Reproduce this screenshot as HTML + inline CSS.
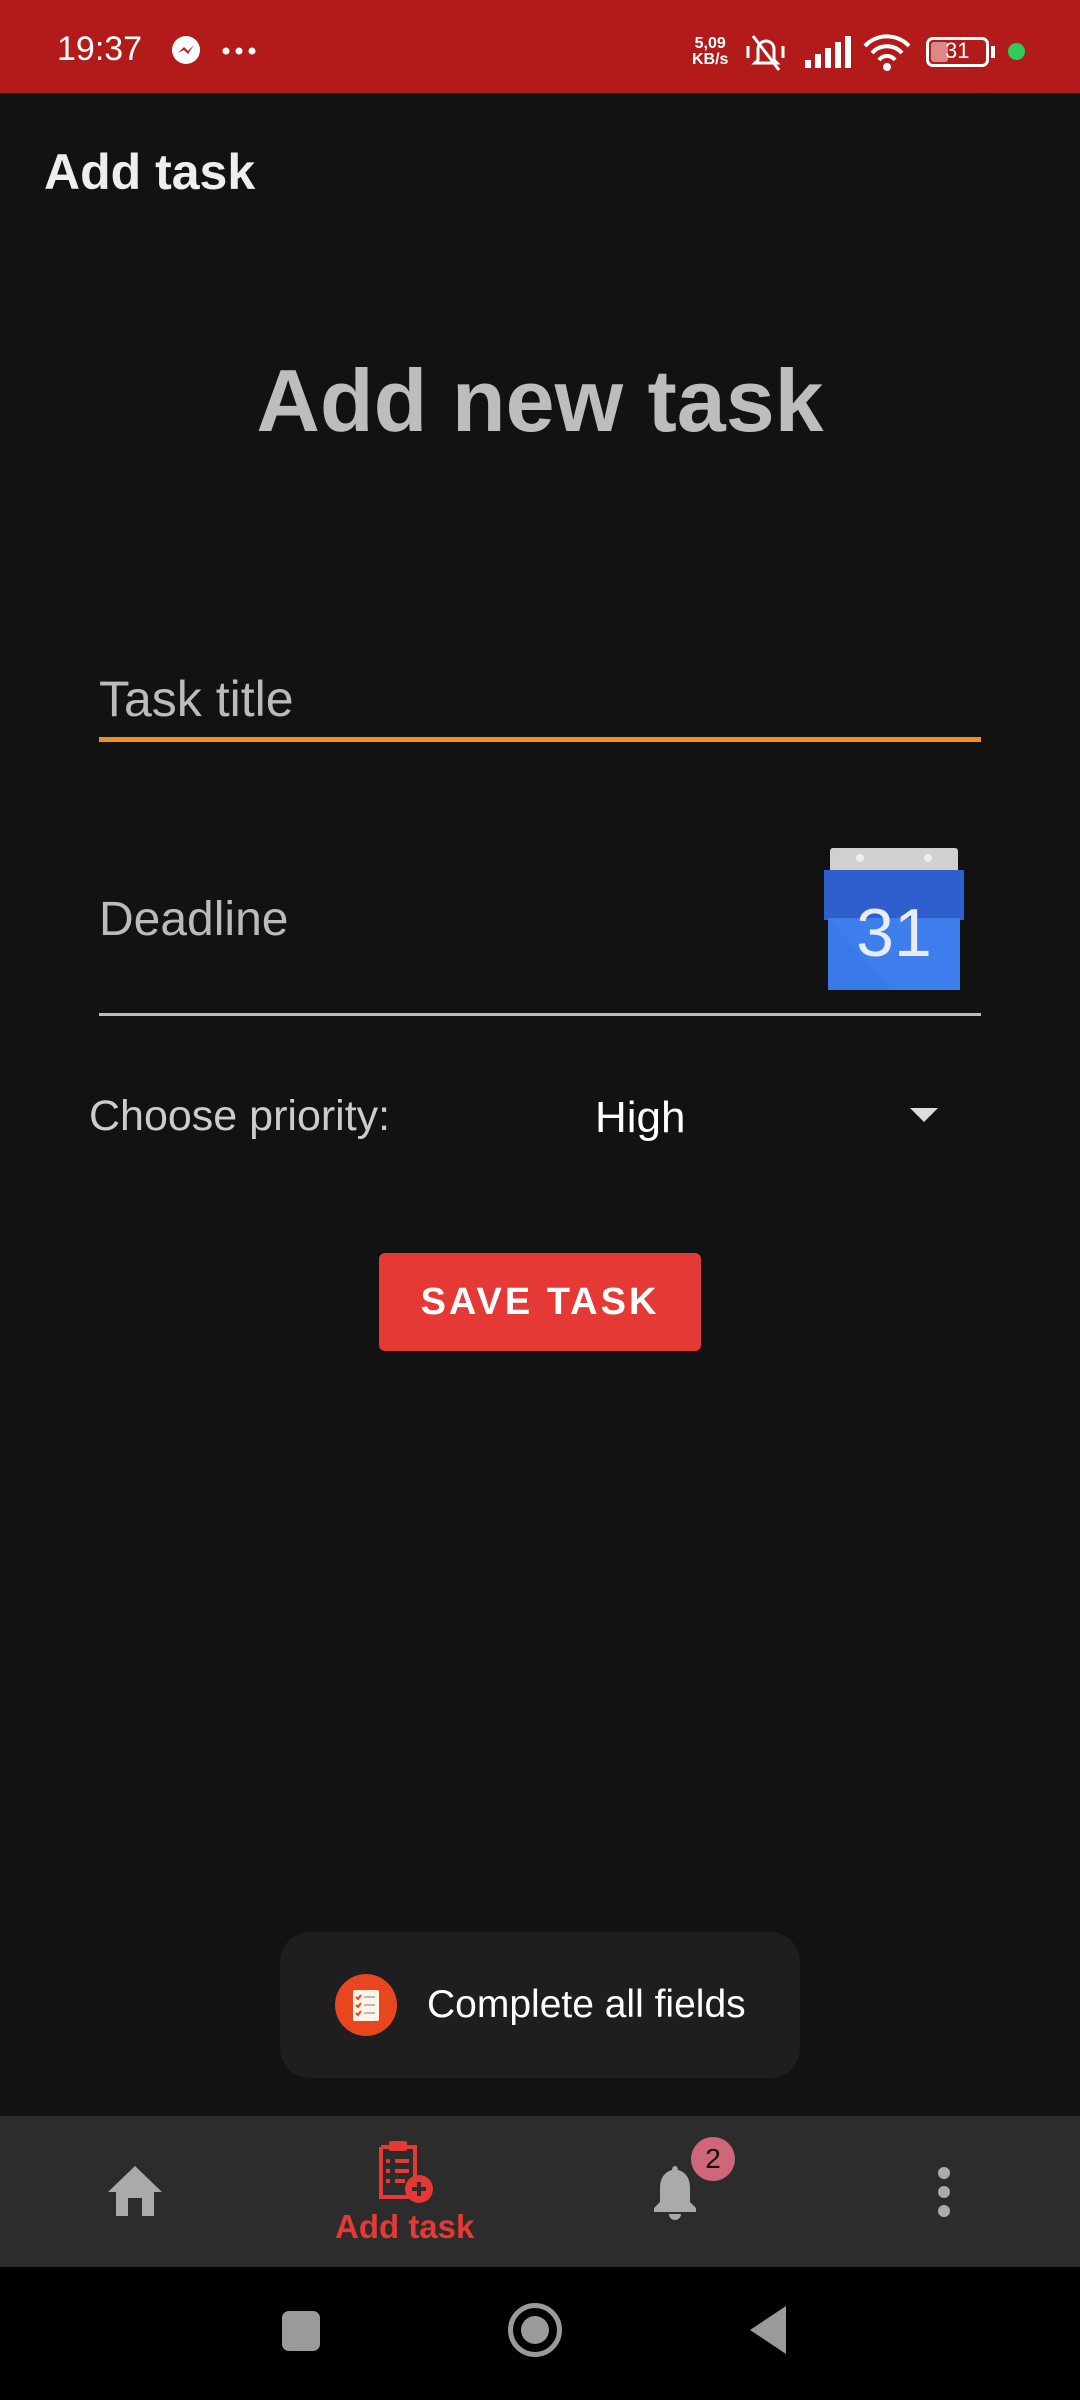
<!DOCTYPE html>
<html><head><meta charset="utf-8"><style>
*{margin:0;padding:0;box-sizing:border-box}
body{width:1080px;height:2400px;background:#121212;font-family:"Liberation Sans",sans-serif;position:relative;overflow:hidden;color:#fff}
.a{position:absolute}
</style></head><body>
<div class="a" style="left:0;top:0;width:1080px;height:93px;background:#b31b1b"></div>
<div class="a" style="left:57px;top:30px;font-size:34px;color:#fff">19:37</div>
<svg class="a" style="left:170px;top:34px" width="32" height="32" viewBox="0 0 32 32"><circle cx="16" cy="16" r="14" fill="#fff"/><path d="M8 19l6-6 4 4 6-6-6 9-4-4z" fill="#b31b1b"/></svg>
<svg class="a" style="left:222px;top:46px" width="34" height="10"><circle cx="4" cy="5" r="3.5" fill="#fff"/><circle cx="17" cy="5" r="3.5" fill="#fff"/><circle cx="30" cy="5" r="3.5" fill="#fff"/></svg>
<div class="a" style="left:692px;top:36px;font-size:16px;line-height:16px;font-weight:bold;color:#fff;text-align:center">5,09<br>KB/s</div>
<svg class="a" style="left:745px;top:32px" width="42" height="40" viewBox="0 0 42 40"><path d="M13 28V17a8 8 0 0 1 16 0v11l3 3H10z" fill="none" stroke="#fff" stroke-width="3"/><path d="M8 4l26 34" stroke="#fff" stroke-width="3"/><path d="M3 14v12M38 14v12" stroke="#fff" stroke-width="3"/></svg>
<svg class="a" style="left:803px;top:36px" width="48" height="32" viewBox="0 0 48 32"><rect x="2" y="24" width="6" height="8" fill="#fff"/><rect x="12" y="18" width="6" height="14" fill="#fff"/><rect x="22" y="12" width="6" height="20" fill="#fff"/><rect x="32" y="6" width="6" height="26" fill="#fff"/><rect x="42" y="0" width="6" height="32" fill="#fff"/></svg>
<svg class="a" style="left:862px;top:32px" width="50" height="40" viewBox="0 0 50 40"><path d="M3 14a30 30 0 0 1 44 0M10 21a20 20 0 0 1 30 0M17 28a10 10 0 0 1 16 0" fill="none" stroke="#fff" stroke-width="4"/><circle cx="25" cy="35" r="4" fill="#fff"/></svg>
<div class="a" style="left:926px;top:37px;width:63px;height:30px;border:3px solid #fff;border-radius:7px"><div style="position:absolute;left:2px;top:2px;width:17px;height:20px;background:#d88;border-radius:3px"></div><div style="position:absolute;left:16px;top:-2px;font-size:22px;color:#fff">31</div></div>
<div class="a" style="left:991px;top:46px;width:4px;height:12px;background:#fff"></div>
<div class="a" style="left:1008px;top:43px;width:17px;height:17px;border-radius:50%;background:#2ecc5a"></div>

<div class="a" style="left:44px;top:143px;font-size:50px;font-weight:bold;color:#eee">Add task</div>
<div class="a" style="left:0;width:1080px;top:350px;text-align:center;font-size:88px;font-weight:bold;color:#bdbdbd">Add new task</div>

<div class="a" style="left:99px;top:670px;font-size:50px;color:#bbb">Task title</div>
<div class="a" style="left:99px;top:737px;width:882px;height:5px;background:#f0901e"></div>
<div class="a" style="left:99px;top:892px;font-size:48px;color:#bbb">Deadline</div>
<div class="a" style="left:99px;top:1013px;width:882px;height:3px;background:#bbb"></div>
<svg class="a" style="left:822px;top:846px" width="144" height="146" viewBox="0 0 144 146"><rect x="8" y="2" width="128" height="30" rx="3" fill="#d0d0d0"/><circle cx="38" cy="12" r="4" fill="#eee"/><circle cx="106" cy="12" r="4" fill="#eee"/><rect x="2" y="24" width="140" height="50" fill="#2f5fcc"/><rect x="6" y="72" width="132" height="72" fill="#3a7ae8"/><path d="M6 72L70 144H138V72z" fill="#3f82f0" opacity=".5"/><text x="72" y="110" text-anchor="middle" font-family="Liberation Sans" font-size="68" fill="#e8ecf4">31</text></svg>

<div class="a" style="left:89px;top:1092px;font-size:43px;color:#ccc">Choose priority:</div>
<div class="a" style="left:595px;top:1093px;font-size:44px;color:#fff">High</div>
<svg class="a" style="left:910px;top:1108px" width="28" height="16"><path d="M0 0h28L14 14z" fill="#ddd"/></svg>

<div class="a" style="left:379px;top:1253px;width:322px;height:98px;background:#e53935;border-radius:6px;text-align:center;line-height:98px;font-size:38px;font-weight:bold;letter-spacing:3px;color:#fff">SAVE TASK</div>

<div class="a" style="left:280px;top:1932px;width:520px;height:146px;background:#1e1e20;border-radius:30px"></div>
<svg class="a" style="left:335px;top:1974px" width="62" height="62" viewBox="0 0 62 62"><circle cx="31" cy="31" r="31" fill="#e8461e"/><rect x="18" y="16" width="26" height="31" rx="2" fill="#fdf3e6"/><path d="M21 23l2 2 3-4M21 31l2 2 3-4M21 39l2 2 3-4" stroke="#e8461e" stroke-width="2" fill="none"/><path d="M29 23h11M29 31h11M29 39h11" stroke="#bbb" stroke-width="2"/></svg>
<div class="a" style="left:427px;top:1983px;font-size:39px;color:#fff">Complete all fields</div>

<div class="a" style="left:0;top:2116px;width:1080px;height:151px;background:#2c2c2c"></div>
<svg class="a" style="left:108px;top:2166px" width="54" height="50" viewBox="0 0 54 50"><path d="M27 0L54 26h-8v24H34V32H20v18H8V26H0z" fill="#aaa"/></svg>
<svg class="a" style="left:375px;top:2137px" width="60" height="68" viewBox="0 0 60 68"><path d="M6 10h34v40M6 10v50h28" fill="none" stroke="#e53935" stroke-width="4"/><rect x="14" y="4" width="18" height="10" rx="2" fill="#e53935"/><path d="M20 24h14M20 34h14M20 44h10M11 24h4M11 34h4M11 44h4" stroke="#e53935" stroke-width="4"/><circle cx="44" cy="52" r="14" fill="#e53935"/><path d="M44 45v14M37 52h14" stroke="#2c2c2c" stroke-width="4"/></svg>
<div class="a" style="left:335px;top:2208px;font-size:33px;font-weight:bold;color:#e53935">Add task</div>
<svg class="a" style="left:652px;top:2166px" width="46" height="54" viewBox="0 0 46 54"><path d="M23 0c2 0 3 2 3 4 8 2 12 9 12 18v14l6 6v4H2v-4l6-6V22c0-9 4-16 12-18 0-2 1-4 3-4z" fill="#aaa"/><path d="M17 48h12a6 6 0 0 1-12 0z" fill="#aaa"/></svg>
<div class="a" style="left:691px;top:2137px;width:44px;height:44px;border-radius:50%;background:#cf6679;text-align:center;line-height:44px;font-size:28px;color:#111">2</div>
<svg class="a" style="left:935px;top:2167px" width="18" height="50"><circle cx="9" cy="6" r="6" fill="#aaa"/><circle cx="9" cy="25" r="6" fill="#aaa"/><circle cx="9" cy="44" r="6" fill="#aaa"/></svg>

<div class="a" style="left:0;top:2267px;width:1080px;height:133px;background:#000"></div>
<div class="a" style="left:282px;top:2311px;width:38px;height:40px;background:#9a9a9a;border-radius:7px"></div>
<div class="a" style="left:508px;top:2303px;width:54px;height:54px;border:5px solid #9a9a9a;border-radius:50%"><div style="position:absolute;left:8px;top:8px;width:28px;height:28px;border-radius:50%;background:#9a9a9a"></div></div>
<svg class="a" style="left:750px;top:2306px" width="38" height="48"><path d="M36 0v48L0 24z" fill="#9a9a9a"/></svg>
</body></html>
